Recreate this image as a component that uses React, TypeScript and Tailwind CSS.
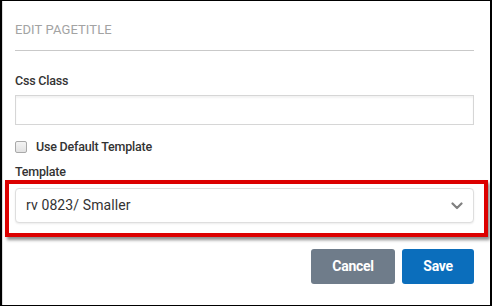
import React from "react";

export default function App() {
  return (
    <div
      className="w-[492px] h-[306px] bg-white border-t border-b border-l-2 border-r-2 border-black shadow-[inset_1px_0_0_#dcdcdc] pl-[13px] pr-[16px] flex flex-col"
      style={{ fontFamily: "Roboto, 'Liberation Sans', sans-serif" }}
    >
      <div className="pt-[20px] text-[13px] leading-[18px] text-[#a3a3a3] tracking-[0.1px]">
        EDIT PAGETITLE
      </div>
      <div className="mt-[11px] border-t border-[#c9c9c9]" />
      <div className="mt-[21px] text-[12.5px] leading-[18px] font-medium text-[#333] tracking-[-0.2px]">
        Css Class
      </div>
      <div className="mt-[5px] h-[30px] border border-[#d6d6d6] bg-white shadow-[inset_0_2px_2px_rgba(0,0,0,0.05)]" />
      <div className="mt-[13px] h-[18px] flex items-center gap-[9px]">
        <div className="w-[12px] h-[12px] rounded-[2px] border border-[#a9a9a9] bg-gradient-to-b from-[#f4f4f4] to-[#e2e2e2]" />
        <span className="text-[12.5px] leading-[18px] font-medium text-[#333] tracking-[-0.2px]">
          Use Default Template
        </span>
      </div>
      <div className="mt-[8px] text-[12.5px] leading-[16px] font-medium text-[#333] tracking-[-0.2px]">
        Template
      </div>
      <div className="-ml-[10px] -mr-[14px] border-[4px] border-[#dc0000] pt-[4px] pb-[10px] pl-[6px] pr-[10px] shadow-[2px_3px_3px_rgba(0,0,0,0.45)]">
        <div className="h-[35px] rounded-[4px] border border-[#dedede] bg-white flex items-center justify-between pl-[10px] pr-[10px] shadow-[0_1px_2px_rgba(0,0,0,0.08)]">
          <span className="text-[14px] text-[#333] tracking-[0.1px]">rv 0823/ Smaller</span>
          <svg width="12" height="8" viewBox="0 0 12 8" fill="none">
            <path d="M1.5 1.5 L6 6 L10.5 1.5" stroke="#808080" strokeWidth="2.2" strokeLinecap="round" strokeLinejoin="round" />
          </svg>
        </div>
      </div>
      <div className="mt-[12px] flex justify-end gap-[7px]">
        <button className="w-[84px] h-[35px] rounded-[3px] bg-[#6f7c8a] text-white font-bold text-[14px] tracking-[-0.3px]">
          Cancel
        </button>
        <button className="w-[72px] h-[35px] rounded-[3px] bg-[#0b6ebc] text-white font-bold text-[14px] tracking-[-0.3px]">
          Save
        </button>
      </div>
    </div>
  );
}
